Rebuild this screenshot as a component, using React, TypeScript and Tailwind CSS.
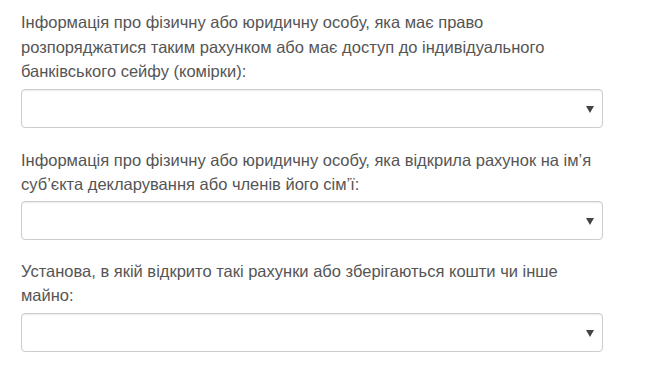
import React from "react";

function Select() {
  return (
    <div className="relative h-[39px] w-[582px] rounded-[4px] border border-[#cccccc] bg-white shadow-[inset_0_1px_1px_rgba(0,0,0,0.075)]">
      <svg className="absolute right-[8px] top-[16px]" width="8" height="7" viewBox="0 0 8 7">
        <path d="M0 0 L8 0 L4 7 Z" fill="#444" />
      </svg>
    </div>
  );
}

export default function App() {
  return (
    <div
      className="min-h-[377px] w-[650px] bg-white pl-[21px] pt-[10px] text-[16.5px] leading-[24.5px] text-[#555555]"
      style={{ fontFamily: '"Liberation Sans", Arial, sans-serif' }}
    >
      <div className="mb-[5px] whitespace-nowrap">
        Інформація про фізичну або юридичну особу, яка має право
        <br />
        розпоряджатися таким рахунком або має доступ до індивідуального
        <br />
        банківського сейфу (комірки):
      </div>
      <Select />
      <div className="mb-[4px] mt-[20px] whitespace-nowrap">
        Інформація про фізичну або юридичну особу, яка відкрила рахунок на ім’я
        <br />
        суб’єкта декларування або членів його сім’ї:
      </div>
      <Select />
      <div className="mb-[5px] mt-[19px] whitespace-nowrap">
        Установа, в якій відкрито такі рахунки або зберігаються кошти чи інше
        <br />
        майно:
      </div>
      <Select />
    </div>
  );
}
